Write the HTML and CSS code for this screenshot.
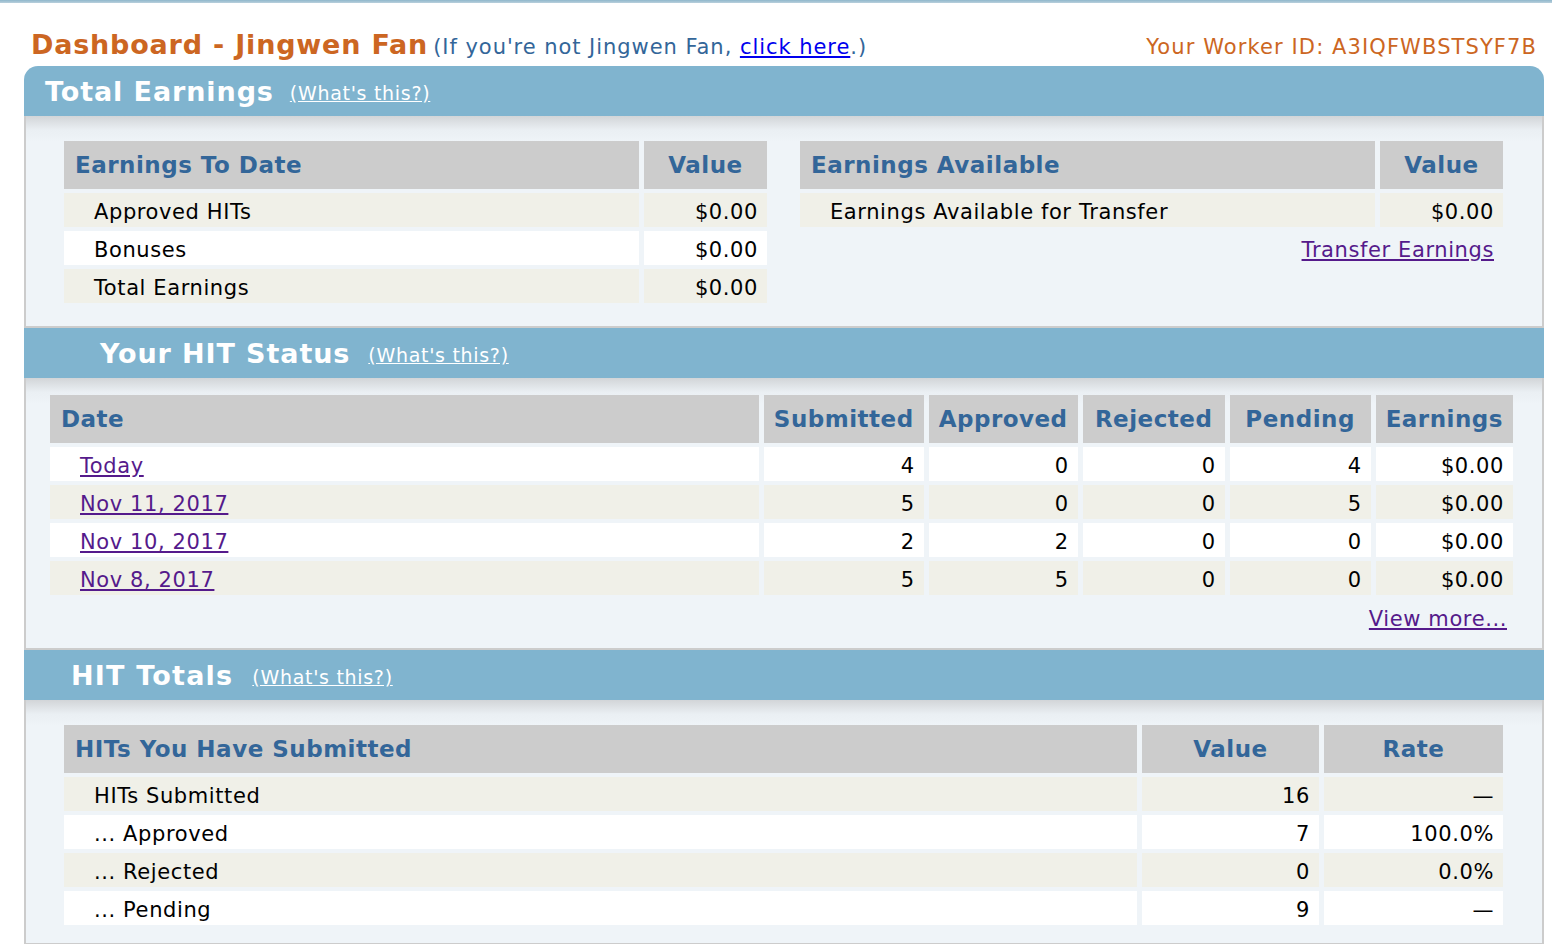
FILE: index.html
```html
<!DOCTYPE html>
<html>
<head>
<meta charset="utf-8">
<title>Dashboard</title>
<link rel="stylesheet" href="styles.css">
</head>
<body>
<div class="topline"></div>
<div class="page">
  <div class="title-row">
    <div class="title"><span class="dash">Dashboard - Jingwen Fan</span> <span class="notyou">(If you're not Jingwen Fan, <a class="blue" href="#">click here</a>.)</span></div>
    <div class="worker">Your Worker ID: A3IQFWBSTSYF7B</div>
  </div>

  <section class="sec first">
    <div class="sec-head pad-1"><span class="sec-title">Total Earnings</span><a class="whats" href="#">(What's this?)</a></div>
    <div class="sec-body body-1">
      <div class="two-col">
        <table class="grid">
          <tr><th class="left">Earnings To Date</th><th class="val">Value</th></tr>
          <tr class="cream"><td class="label">Approved HITs</td><td class="num">$0.00</td></tr>
          <tr class="white"><td class="label">Bonuses</td><td class="num">$0.00</td></tr>
          <tr class="cream"><td class="label">Total Earnings</td><td class="num">$0.00</td></tr>
        </table>
        <table class="grid">
          <tr><th class="left">Earnings Available</th><th class="val">Value</th></tr>
          <tr class="cream"><td class="label">Earnings Available for Transfer</td><td class="num">$0.00</td></tr>
          <tr><td class="num link-cell" colspan="2"><a class="purple" href="#">Transfer Earnings</a></td></tr>
        </table>
      </div>
    </div>
  </section>

  <section class="sec">
    <div class="sec-head pad-2"><span class="sec-title">Your HIT Status</span><a class="whats" href="#">(What's this?)</a></div>
    <div class="sec-body body-2">
      <table class="grid status">
        <tr><th class="left">Date</th><th class="c-sub">Submitted</th><th class="c-app">Approved</th><th class="c-rej">Rejected</th><th class="c-pen">Pending</th><th class="c-ear">Earnings</th></tr>
        <tr class="white"><td class="label"><a class="purple" href="#">Today</a></td><td class="num">4</td><td class="num">0</td><td class="num">0</td><td class="num">4</td><td class="num">$0.00</td></tr>
        <tr class="cream"><td class="label"><a class="purple" href="#">Nov 11, 2017</a></td><td class="num">5</td><td class="num">0</td><td class="num">0</td><td class="num">5</td><td class="num">$0.00</td></tr>
        <tr class="white"><td class="label"><a class="purple" href="#">Nov 10, 2017</a></td><td class="num">2</td><td class="num">2</td><td class="num">0</td><td class="num">0</td><td class="num">$0.00</td></tr>
        <tr class="cream"><td class="label"><a class="purple" href="#">Nov 8, 2017</a></td><td class="num">5</td><td class="num">5</td><td class="num">0</td><td class="num">0</td><td class="num">$0.00</td></tr>
      </table>
      <div class="more"><a class="purple" href="#">View more...</a></div>
    </div>
  </section>

  <section class="sec">
    <div class="sec-head pad-3"><span class="sec-title">HIT Totals</span><a class="whats" href="#">(What's this?)</a></div>
    <div class="sec-body body-3">
      <table class="grid totals">
        <tr><th class="left">HITs You Have Submitted</th><th class="c-v">Value</th><th class="c-r">Rate</th></tr>
        <tr class="cream"><td class="label">HITs Submitted</td><td class="num">16</td><td class="num">&mdash;</td></tr>
        <tr class="white"><td class="label">... Approved</td><td class="num">7</td><td class="num">100.0%</td></tr>
        <tr class="cream"><td class="label">... Rejected</td><td class="num">0</td><td class="num">0.0%</td></tr>
        <tr class="white"><td class="label">... Pending</td><td class="num">9</td><td class="num">&mdash;</td></tr>
      </table>
    </div>
  </section>
</div>
</body>
</html>
```

FILE: styles.css
```css
html, body {
  margin: 0;
  padding: 0;
  background: #ffffff;
  font-family: "DejaVu Sans", Verdana, sans-serif;
  color: #000;
}

.topline {
  height: 3px;
  background: linear-gradient(#8fb7cc, #b9d0dc);
}

.page {
  margin-left: 24px;
  width: 1520px;
}

.title-row {
  height: 63px;
  box-sizing: border-box;
  padding: 26px 7px 0 7px;
  display: flex;
  justify-content: space-between;
  align-items: baseline;
}

.dash {
  color: #cc6622;
  font-weight: bold;
  font-size: 27px;
  letter-spacing: 0.8px;
}

.notyou {
  color: #336699;
  font-size: 21px;
  letter-spacing: 0.95px;
}

a.blue { color: #0000ee; text-decoration: underline; }
a.purple { color: #551a8b; text-decoration: underline; }

.worker {
  color: #cc6622;
  font-size: 21px;
  letter-spacing: 1.1px;
}

.sec-head {
  height: 50px;
  background: #80b4cf;
  display: flex;
  align-items: center;
  box-sizing: border-box;
}

.first .sec-head {
  border-radius: 14px 14px 0 0;
}

.pad-1 { padding-left: 21px; }
.pad-2 { padding-left: 76px; }
.pad-3 { padding-left: 47px; }

.sec-title {
  color: #ffffff;
  font-weight: bold;
  font-size: 27px;
  letter-spacing: 0.9px;
  margin-right: 16px;
}

.pad-2 .sec-title { margin-right: 18px; }
.pad-3 .sec-title { margin-right: 19px; letter-spacing: 1.2px; }

.whats {
  color: #ffffff;
  font-size: 19px;
  letter-spacing: 0.7px;
  text-decoration: underline;
  position: relative;
  top: 2px;
}

.sec-body {
  background: linear-gradient(#d2d5d8 0px, #eaeff3 14px, #eff4f8 26px);
  border-left: 2px solid #cccccc;
  border-right: 2px solid #cccccc;
  border-bottom: 2px solid #cccccc;
}

.body-1 { padding: 21px 34px 19px 33px; }
.body-2 { padding: 13px 24px 15px 19px; }
.body-3 { padding: 21px 34px 14px 33px; }

.two-col {
  display: flex;
  align-items: flex-start;
  gap: 23px;
}

.two-col .grid { flex: 1; }

table.grid {
  border-collapse: separate;
  border-spacing: 5px 4px;
  width: 100%;
}

.grid th {
  background: #cccccc;
  color: #336699;
  font-weight: bold;
  font-size: 23px;
  letter-spacing: 0.5px;
  height: 48px;
  padding: 0 10px;
  text-align: center;
  white-space: nowrap;
}

.grid th.left { text-align: left; padding-left: 11px; }
.grid th.val { width: 103px; }

.grid td {
  height: 30px;
  padding: 4px 10px 0 10px;
  font-size: 21px;
  letter-spacing: 0.6px;
  white-space: nowrap;
}

.grid td.label { padding-left: 30px; }
.grid td.num { text-align: right; padding-right: 9px; }

tr.cream td { background: #f0f0e8; }
tr.white td { background: #ffffff; }

.status th.c-sub { width: 138px; }
.status th.c-app { width: 129px; }
.status th.c-rej { width: 122px; }
.status th.c-pen { width: 121px; }
.status th.c-ear { width: 117px; }

.totals th.c-v { width: 157px; }
.totals th.c-r { width: 159px; }

.more {
  text-align: right;
  font-size: 21px;
  letter-spacing: 0.6px;
  padding-right: 11px;
  margin-top: 4px;
  line-height: 30px;
  height: 30px;
  padding-top: 1px;
  box-sizing: border-box;
}
```
